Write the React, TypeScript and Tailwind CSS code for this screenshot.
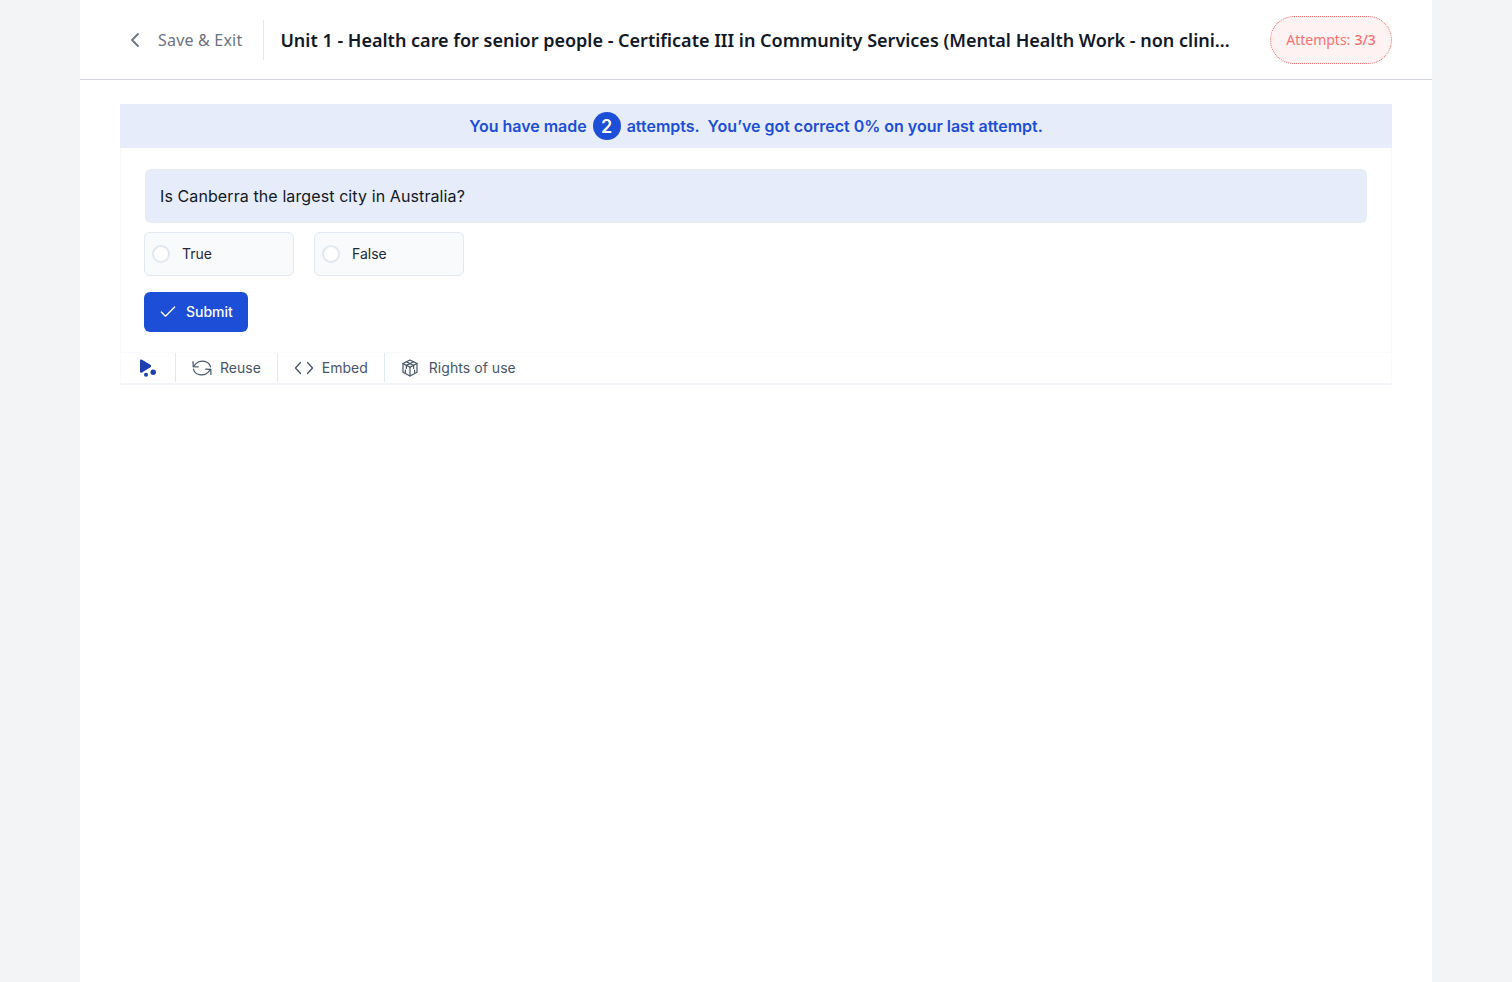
import { Check, ChevronLeft } from "lucide-react";

const options = ["True", "False"];

function ReuseIcon() {
  return (
    <svg width="20" height="16" viewBox="0 0 20 16" fill="none" stroke="#475569" strokeWidth="1.2" strokeLinecap="round" strokeLinejoin="round">
      <path d="M18.5 7 A8.2 6.8 0 0 0 4 3.6 L1.3 6.6" />
      <path d="M1 1.6 L1.3 6.6 L6.3 6.8" />
      <path d="M1.5 9 A8.2 6.8 0 0 0 16 12.4 L18.7 9.4" />
      <path d="M19 14.4 L18.7 9.4 L13.7 9.2" />
    </svg>
  );
}

function EmbedIcon() {
  return (
    <svg width="20" height="20" viewBox="0 0 20 20" fill="none" stroke="#475569" strokeWidth="1.3" strokeLinecap="round" strokeLinejoin="round">
      <path d="M6.5 4.5 L1.5 10 L6.5 15.5" />
      <path d="M13.5 4.5 L18.5 10 L13.5 15.5" />
    </svg>
  );
}

function BoxIcon() {
  return (
    <svg width="18" height="18" viewBox="0 0 18 18" fill="none" stroke="#475569" strokeWidth="1.2" strokeLinejoin="round" strokeLinecap="round">
      <path d="M9 1 L16 4.5 V13.2 L9 17 L2 13.2 V4.5 Z" />
      <path d="M2 4.5 L9 8.2 L16 4.5" />
      <path d="M9 8.2 V17" />
      <path d="M5.4 2.8 L12.6 6.4 V9.4" />
      <path d="M12.6 2.8 L5.4 6.4 V9.4" />
      <path d="M4.4 11 V13.4 M13.6 11 V13.4" />
    </svg>
  );
}

function PlayLogo() {
  return (
    <svg width="18" height="18" viewBox="0 0 18 18" fill="#1e40af">
      <path d="M1 1.8 C1 0.6 2 0.2 3 0.7 L11.4 5.8 C12.4 6.5 12.4 7.6 11.4 8.3 L3 13.4 C2 14 1 13.4 1 12.4 Z" />
      <circle cx="7" cy="15.8" r="2" />
      <circle cx="14.2" cy="13.2" r="2.7" />
    </svg>
  );
}

export default function App() {
  return (
    <div className="min-h-screen bg-[#f3f4f6] font-['Inter',sans-serif]">
      <div className="mx-auto min-h-[982px] w-[1352px] bg-white">
        {/* header */}
        <header className="flex h-[80px] items-center border-b border-[#d1d5db] px-10 font-['Noto_Sans',sans-serif]">
          <div className="flex h-10 items-center border-r border-[#e5e7eb] pr-[21px]">
            <ChevronLeft className="ml-[3px] mr-[11px] text-[#6b7280]" size={24} strokeWidth={1.8} />
            <span className="text-[16px] tracking-[0.2px] text-[#6b7280]">Save &amp; Exit</span>
          </div>
          <h1 className="ml-4 whitespace-nowrap pt-px text-[18px] font-semibold text-[#111827]">
            Unit 1 - Health care for senior people - Certificate III in Community Services (Mental Health Work - non clini…
          </h1>
          <div className="ml-auto flex h-12 w-[122px] items-center justify-center gap-1 rounded-3xl border border-dotted border-[#f56565] bg-[#fef2f2] text-[14px] text-[#f87171]">
            <span>Attempts:</span>
            <span className="font-medium">3/3</span>
          </div>
        </header>

        <main className="px-10 pt-6">
          {/* attempts banner */}
          <div className="flex h-11 items-center justify-center bg-[#e6ecfa] text-[16px] font-semibold tracking-[-0.02px] text-[#1d4ed8]">
            <span>You have made</span>
            <span className="mx-[6px] flex h-7 w-7 items-center justify-center rounded-full bg-[#1d4ed8] text-[18px] font-semibold text-white">2</span>
            <span>attempts.</span>
            <span className="ml-[8px]">You’ve got correct 0% on your last attempt.</span>
          </div>

          <div className="shadow-[inset_1px_0_0_#f8fafc,inset_-1px_0_0_#f8fafc]">
            <div className="px-6 pb-5 pt-[21px]">
              <div className="mx-px flex h-[54px] items-center rounded-md bg-[#e6ecfa] px-[15px] text-[16px] tracking-[0.1px] text-[#111827]">
                Is Canberra the largest city in Australia?
              </div>
              <div className="mt-[9px] flex gap-5">
                {options.map((option) => (
                  <label key={option} className="flex h-11 w-[150px] items-center rounded-md border border-[#e2e8f0] bg-[#f8fafc] pb-px pl-[7px] text-[14px] text-[#1e293b]">
                    <span className="h-[18px] w-[18px] rounded-full border-2 border-[#e2e8f0] bg-white" />
                    <span className="ml-[12px]">{option}</span>
                  </label>
                ))}
              </div>
              <button className="mt-4 flex h-10 w-[104px] items-center rounded-md bg-[#1d4ed8] pb-px pl-[14px] text-[14px] font-medium text-white">
                <Check size={20} strokeWidth={1.6} />
                <span className="ml-[8px]">Submit</span>
              </button>
            </div>

            {/* action bar */}
            <div className="flex h-[33px] items-center border-t border-b-2 border-t-[#f8fafc] border-b-[#f1f5f9] pb-px text-[14px] text-[#475569]">
              <div className="flex h-full w-[56px] items-center justify-center border-r border-[#e2e8f0]">
                <PlayLogo />
              </div>
              <div className="flex h-full items-center gap-2 border-r border-[#e2e8f0] px-4">
                <ReuseIcon />
                <span>Reuse</span>
              </div>
              <div className="flex h-full items-center gap-2 border-r border-[#e2e8f0] px-4">
                <EmbedIcon />
                <span>Embed</span>
              </div>
              <div className="flex h-full items-center gap-[10px] px-4">
                <BoxIcon />
                <span className="tracking-[0.05px]">Rights of use</span>
              </div>
            </div>
          </div>
        </main>
      </div>
    </div>
  );
}
